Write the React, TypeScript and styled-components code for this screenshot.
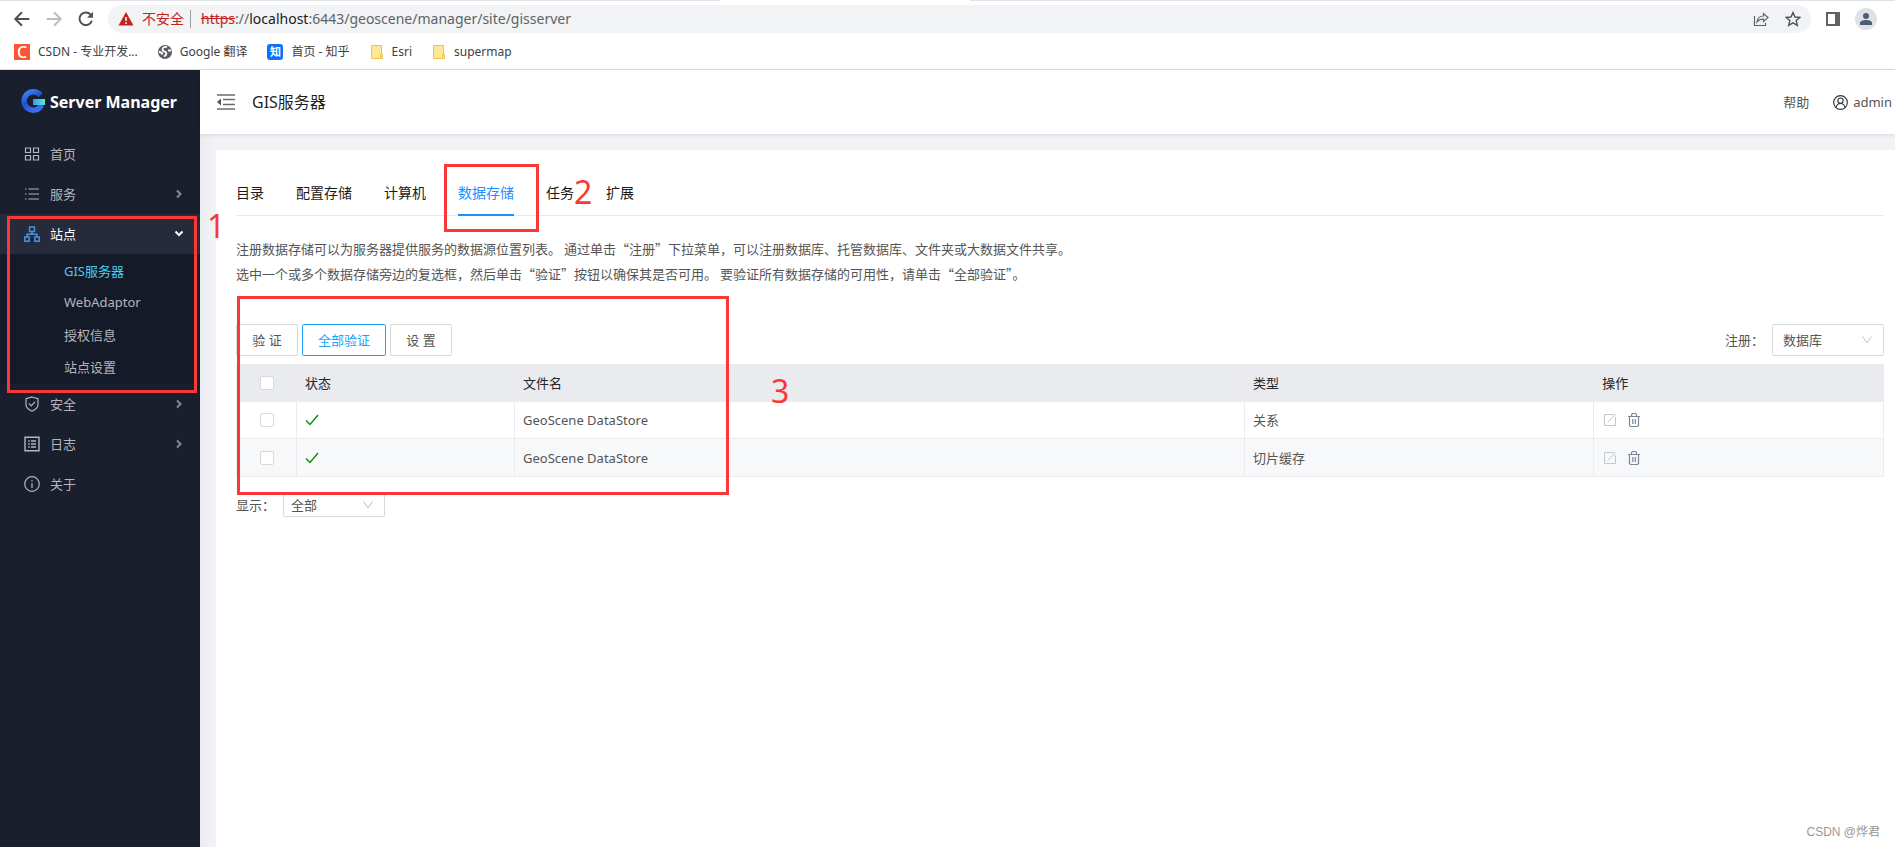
import React from "react";
import styled, { createGlobalStyle, css } from "styled-components";

const LATIN = `"Noto Sans", "Noto Sans CJK SC", sans-serif`;
const HAN = `"Noto Sans CJK SC", "Noto Sans", sans-serif`;
const RED = "#fb3838";

const Global = createGlobalStyle`
  *, *::before, *::after { box-sizing: border-box; }
  body { margin: 0; background: #fff; font-family: ${LATIN}; font-size: 13px; color: #555; }
  button, select, input { font: inherit; color: inherit; margin: 0; }
  a { color: inherit; text-decoration: none; }
  ul { list-style: none; margin: 0; padding: 0; }
  svg { display: block; flex: none; }
`;

const Page = styled.div`
  display: flex;
  flex-direction: column;
  min-height: 100vh;
`;

/* ---------- browser frame ---------- */

const Browser = styled.header`
  height: 70px;
  border-bottom: 1px solid #dadce0;
  background: #fff;
`;

/* bottom edge of the tab strip, open under the active tab */
const TabStrip = styled.div`
  height: 1px;
  padding-left: 38%;
  background: #dee1e6;
`;

const ActiveTabEdge = styled.div`
  width: 250px;
  height: 1px;
  background: #fff;
`;

const AddressRow = styled.div`
  display: flex;
  align-items: center;
  height: 36px;
  padding: 0 18px 0 12px;
`;

const IconButton = styled.button<{ $w?: number }>`
  display: flex;
  align-items: center;
  justify-content: center;
  width: ${(p) => p.$w ?? 20}px;
  height: 20px;
  padding: 0;
  border: 0;
  background: none;
  cursor: pointer;
`;

const NavButtons = styled.div`
  display: flex;
  gap: 12px;
  padding-right: 12px;
`;

const AddressBar = styled.div`
  flex: 1;
  display: flex;
  align-items: center;
  gap: 10px;
  height: 28px;
  padding: 0 8px 0 10px;
  border-radius: 14px;
  background: #f1f3f4;
  font-size: 14px;
  line-height: 20px;
`;

const Warning = styled.span`
  display: flex;
  align-items: center;
  gap: 8px;
  padding-right: 6px;
  border-right: 1px solid #9aa0a6;
  height: 18px;
  color: #c5221f;
`;

const Url = styled.div`
  flex: 1;
  color: #5f6368;
  white-space: nowrap;
  s { color: #c5221f; }
  b { font-weight: 400; color: #202124; }
`;

const AddressTools = styled.div`
  display: flex;
  gap: 12px;
`;

const WindowTools = styled.div`
  display: flex;
  align-items: center;
  gap: 12px;
  padding-left: 12px;
`;

const Avatar = styled.button`
  display: flex;
  align-items: center;
  justify-content: center;
  width: 22px;
  height: 22px;
  padding: 0;
  border: 0;
  border-radius: 50%;
  background: #dee1e6;
`;

const Bookmarks = styled.nav`
  display: flex;
  align-items: center;
  gap: 20px;
  height: 30px;
  padding-left: 14px;
`;

const Bookmark = styled.a`
  display: flex;
  align-items: center;
  gap: 8px;
  font-size: 12px;
  line-height: 16px;
  color: #3c4043;
`;

const SiteBadge = styled.span<{ $bg: string; $round?: boolean }>`
  display: flex;
  align-items: center;
  justify-content: center;
  width: 16px;
  height: 16px;
  border-radius: ${(p) => (p.$round ? 3 : 0)}px;
  background: ${(p) => p.$bg};
  color: #fff;
  font-size: ${(p) => (p.$round ? 11 : 16)}px;
  font-weight: ${(p) => (p.$round ? 700 : 500)};
`;

/* ---------- application ---------- */

const Shell = styled.div`
  flex: 1;
  display: flex;
`;

const Sidebar = styled.aside`
  flex: none;
  width: 200px;
  background: #1a1f2d;
  color: #b4b6bb;
`;

const Brand = styled.div`
  display: flex;
  align-items: center;
  gap: 4px;
  height: 64px;
  padding-left: 21px;
  color: #fff;
  font-size: 16px;
  font-weight: 700;
  white-space: nowrap;
`;

const MenuLink = styled.a<{ $active?: boolean }>`
  display: flex;
  align-items: center;
  gap: 10px;
  height: 40px;
  padding: 0 16px 0 24px;
  ${(p) => p.$active && css`background: #252b3a; color: #fff;`}
`;

const MenuText = styled.span`
  flex: 1;
  line-height: 20px;
`;

const Group = styled.li`
  position: relative;
`;

const SubMenu = styled.ul`
  padding-bottom: 2px;
  background: #151a28;
`;

const SubLink = styled.a<{ $active?: boolean }>`
  display: flex;
  align-items: center;
  height: 32px;
  padding-left: 64px;
  color: ${(p) => (p.$active ? "#45cdf0" : "inherit")};
`;

const Main = styled.div`
  flex: 1;
  min-width: 0;
  display: flex;
  flex-direction: column;
  background: #f0f2f6;
`;

const TopBar = styled.div`
  position: relative;
  display: flex;
  align-items: center;
  height: 64px;
  padding: 0 3px 0 16px;
  background: #fff;
  box-shadow: 0 1px 4px rgba(0, 21, 41, 0.1);
`;

const Title = styled.h1`
  flex: 1;
  margin: 0 0 0 16px;
  font-size: 16px;
  font-weight: 400;
  line-height: 24px;
  color: #1f1f1f;
`;

const TopLinks = styled.div`
  display: flex;
  gap: 24px;
  a { display: flex; align-items: center; gap: 5px; line-height: 20px; }
`;

const Body = styled.main`
  flex: 1;
  display: flex;
  padding: 16px 0 0 16px;
  background: linear-gradient(to right, #e9ebef, #f0f2f6 12px);
`;

const Card = styled.section`
  flex: 1;
  min-width: 0;
  display: flex;
  flex-direction: column;
  padding: 20px 11px 8px 20px;
  background: #fff;
`;

const Tabs = styled.nav`
  display: flex;
  gap: 32px;
  height: 46px;
  border-bottom: 1px solid #e8e8e8;
`;

const Tab = styled.a<{ $active?: boolean }>`
  position: relative;
  height: 46px;
  font-size: 14px;
  line-height: 46px;
  color: ${(p) => (p.$active ? "#1890ff" : "#1a1a1a")};
  border-bottom: 2px solid ${(p) => (p.$active ? "#1890ff" : "transparent")};
`;

const Intro = styled.p`
  margin: 20px 0 2px;
  font-family: ${HAN};
  line-height: 25px;
`;

const Data = styled.div`
  position: relative;
  padding-top: 36px;
`;

const Toolbar = styled.div`
  display: flex;
  align-items: center;
  gap: 4px;
`;

const Button = styled.button<{ $primary?: boolean }>`
  height: 32px;
  padding: 0 ${(p) => (p.$primary ? 15 : 15)}px;
  min-width: 62px;
  border: 1px solid ${(p) => (p.$primary ? "#1da1fb" : "#d9d9d9")};
  border-radius: 2px;
  background: #fff;
  color: ${(p) => (p.$primary ? "#1da1fb" : "#555")};
  line-height: 20px;
`;

const Field = styled.label<{ $end?: boolean }>`
  display: flex;
  align-items: center;
  gap: 8px;
  margin-left: ${(p) => (p.$end ? "auto" : "0")};
  line-height: 20px;
`;

const SelectBox = styled.span<{ $w: number; $h: number }>`
  display: grid;
  align-items: center;
  width: ${(p) => p.$w}px;
  height: ${(p) => p.$h}px;
  border: 1px solid #d9d9d9;
  border-radius: 2px;
  > * { grid-area: 1 / 1; }
  > svg { justify-self: end; margin-right: 10px; pointer-events: none; }
`;

const Select = styled.select<{ $pad: number }>`
  appearance: none;
  width: 100%;
  height: 100%;
  padding: 0 ${(p) => p.$pad}px;
  border: 0;
  background: none;
  outline: 0;
`;

const Table = styled.table`
  width: 100%;
  margin-top: 8px;
  table-layout: fixed;
  border-collapse: collapse;
  th, td {
    height: 37px;
    padding: 0 8px;
    border: 1px solid #ececee;
    text-align: left;
    font-weight: 400;
    line-height: 20px;
  }
  th { background: #eaebef; color: #262626; }
  tbody tr:nth-child(even) { height: 38px; background: #f7f8fa; }
  th:first-child, td:first-child { text-align: center; }
`;

const Col = styled.col<{ $w: string }>`
  width: ${(p) => p.$w};
`;

const Checkbox = styled.input`
  appearance: none;
  display: block;
  width: 14px;
  height: 14px;
  margin: 0 auto;
  border: 1px solid #d9d9d9;
  border-radius: 2px;
  background: #fff;
`;

const Actions = styled.div`
  display: flex;
  gap: 4px;
`;

const Footer = styled.div`
  padding-top: 16px;
`;

const Watermark = styled.p`
  margin: auto 4px 0 0;
  text-align: right;
  font-family: "Liberation Sans", "Noto Sans CJK SC", sans-serif;
  font-size: 12px;
  line-height: 14px;
  color: #999;
`;

/* ---------- red marks drawn over the page ---------- */

const Frame = styled.span<{ $t: number; $r: string; $b: number; $l: number; $w?: number }>`
  position: absolute;
  z-index: 1;
  top: ${(p) => p.$t}px;
  right: ${(p) => p.$r};
  bottom: ${(p) => p.$b}px;
  left: ${(p) => p.$l}px;
  width: ${(p) => (p.$w ? `${p.$w}px` : "auto")};
  border: 3px solid ${RED};
  pointer-events: none;
`;

const Digit = styled.span<{ $t: number; $l: number }>`
  position: absolute;
  z-index: 1;
  top: ${(p) => p.$t}px;
  left: ${(p) => p.$l}px;
  font-size: 32px;
  line-height: 32px;
  color: ${RED};
  pointer-events: none;
`;

/* ---------- icons ---------- */

const Icon = ({ size = 16, children, color = "currentColor", w = 1.2 }: { size?: number; children: React.ReactNode; color?: string; w?: number }) => (
  <svg width={size} height={size} viewBox="0 0 16 16" fill="none" stroke={color} strokeWidth={w} aria-hidden="true">
    {children}
  </svg>
);

const icons: Record<string, React.ReactNode> = {
  home: <Icon><path d="M1.500 2h5v4.500h-5zM9.500 2h5v4.500h-5zM1.500 9.500h5v4.500h-5zM9.500 9.500h5v4.500h-5z" /></Icon>,
  list: <Icon><path d="M4.500 3h10.500M4.500 8h10.500M4.500 13h10.500M1 3h1.500M1 8h1.500M1 13h1.500" /></Icon>,
  site: <Icon color="#4796e6" w={1.400}><path d="M5.500 1h5v4.500h-5zM.800 11h4.400v4.200H.800zM10.800 11h4.400v4.200h-4.400zM8 5.500v2.500M3 11V8.200h10V11" /></Icon>,
  shield: <Icon><path d="M8 1l6 1.800v6.200c0 2.600-3 4.800-6 6.200-3-1.400-6-3.600-6-6.200V2.800zM5 7.500l2.300 2.300 3.700-4" /></Icon>,
  log: <Icon w={1.400}><path d="M1 1.200h14v13.600H1zM4.200 5h1.600M4.200 8h1.600M4.200 11h1.600M7 5h5M7 8h5M7 11h5" /></Icon>,
  about: <Icon><circle cx="8" cy="8" r="7.300" /><path d="M8 7v5M8 4v1.500" /></Icon>,
};

const Chevron = ({ down }: { down?: boolean }) => (
  <svg width="10" height="10" viewBox="0 0 10 10" fill="none" stroke={down ? "#fff" : "#878a92"} strokeWidth="2" aria-hidden="true">
    <path d={down ? "M1.500 2.500l3.500 3.500L8.500 2.500" : "M3 1.500L6.500 5 3 8.500"} />
  </svg>
);

const Caret = () => (
  <svg width="12" height="12" viewBox="0 0 12 12" fill="none" stroke="#bfbfbf" aria-hidden="true">
    <path d="M1.500 2.500L6 9l4.500-6.500" />
  </svg>
);

const Folder = () => (
  <svg width="14" height="16" viewBox="0 0 14 16" aria-hidden="true">
    <path d="M1.500 1.500h10v13h-10z" fill="#ffe797" stroke="#e9c54e" />
    <path d="M10.500 10.500h2v4h-2z" fill="#ffe797" stroke="#e9c54e" />
  </svg>
);

const Logo = () => (
  <svg width="25" height="26" viewBox="0 0 25 26" aria-hidden="true">
    <defs>
      <linearGradient id="ring" x1="0" y1="0" x2="0.600" y2="1">
        <stop offset="0" stopColor="#3f86f7" />
        <stop offset="0.500" stopColor="#2450cf" />
        <stop offset="1" stopColor="#3c6cf0" />
      </linearGradient>
      <linearGradient id="bar" x1="0" x2="1">
        <stop offset="0" stopColor="#2f9fe8" />
        <stop offset="1" stopColor="#5eeadb" />
      </linearGradient>
    </defs>
    <path d="M19.500 6.200A9.200 9.200 0 1 0 20.600 16" fill="none" stroke="url(#ring)" strokeWidth="5.500" />
    <path d="M12 10h12v6H12z" fill="url(#bar)" />
  </svg>
);

const EditIcon = () => (
  <svg width="16" height="16" viewBox="0 0 16 16" fill="none" stroke="#c3c8d0" aria-hidden="true">
    <path d="M12 2.500H2.500v11h11V5M5.500 10.500L13.500 2.500" />
  </svg>
);

const TrashIcon = () => (
  <svg width="16" height="16" viewBox="0 0 16 16" fill="none" stroke="#7d879b" strokeWidth="1.200" aria-hidden="true">
    <path d="M2 4.500h12M5.500 4.500V2.500l1-1h3l1 1v2M3.500 4.500v9l1 1h7l1-1v-9M6.800 7v5M9.300 7v5" />
  </svg>
);

/* ---------- content ---------- */

const siteLinks = ["GIS服务器", "WebAdaptor", "授权信息", "站点设置"];
const tabs = ["目录", "配置存储", "计算机", "数据存储", "任务", "扩展"];
const rows = [
  { name: "GeoScene DataStore", type: "关系" },
  { name: "GeoScene DataStore", type: "切片缓存" },
];

const MenuItem = ({ icon, label, more }: { icon: string; label: string; more?: boolean }) => (
  <li>
    <MenuLink href="#">
      {icons[icon]}
      <MenuText>{label}</MenuText>
      {more && <Chevron />}
    </MenuLink>
  </li>
);

export default function App() {
  return (
    <Page>
      <Global />
      <Browser>
        <TabStrip><ActiveTabEdge /></TabStrip>
        <AddressRow>
          <NavButtons>
            <IconButton aria-label="后退">
              <Icon size={18} color="#4d5156" w={1.700}><path d="M14.500 8H2.500M8 2L2 8l6 6" /></Icon>
            </IconButton>
            <IconButton aria-label="前进">
              <Icon size={18} color="#babcbe" w={1.700}><path d="M1.500 8h12M8 2l6 6-6 6" /></Icon>
            </IconButton>
            <IconButton aria-label="刷新">
              <Icon size={18} color="#4d5156" w={1.800}>
                <path d="M13.200 9.500A5.600 5.600 0 1 1 12 4" />
                <path d="M14.200 1.500v5.300H8.900z" fill="#4d5156" stroke="none" />
              </Icon>
            </IconButton>
          </NavButtons>
          <AddressBar>
            <Warning>
              <svg width="16" height="16" viewBox="0 0 16 16" aria-hidden="true">
                <path d="M8 1l7.500 13.500H.500z" fill="#c5221f" />
                <path d="M8 6v4M8 11.200v1.800" stroke="#fff" strokeWidth="1.500" />
              </svg>
              不安全
            </Warning>
            <Url role="textbox" aria-label="地址"><s>https</s>://<b>localhost</b>:6443/geoscene/manager/site/gisserver</Url>
            <AddressTools>
              <IconButton aria-label="分享">
                <Icon color="#5f6368"><path d="M1.500 5v9.500h11V12M4 11c.5-4 3-6 6.500-6V2.500L15 6.500l-4.500 4V8C8 8 5.500 9 4 11z" /></Icon>
              </IconButton>
              <IconButton aria-label="收藏">
                <Icon color="#4d5156" w={1.400}><path d="M8 1.500l2 4.500 4.800.400-3.600 3.200 1.100 4.800L8 11.900l-4.300 2.500 1.100-4.800L1.200 6.400 6 6z" /></Icon>
              </IconButton>
            </AddressTools>
          </AddressBar>
          <WindowTools>
            <IconButton aria-label="侧边栏">
              <svg width="14" height="14" viewBox="0 0 14 14" aria-hidden="true">
                <path d="M0 0h14v14H0zM2 2v10h7V2z" fill="#5f6368" fillRule="evenodd" />
              </svg>
            </IconButton>
            <Avatar aria-label="用户">
              <svg width="12" height="12" viewBox="0 0 12 12" fill="#4f5b73" aria-hidden="true">
                <circle cx="6" cy="3" r="3" />
                <path d="M0 12V10c0-2 3-3 6-3s6 1 6 3v2z" />
              </svg>
            </Avatar>
          </WindowTools>
        </AddressRow>
        <Bookmarks>
          <Bookmark href="#"><SiteBadge $bg="#fc5531">C</SiteBadge>CSDN - 专业开发...</Bookmark>
          <Bookmark href="#">
            <svg width="14" height="16" viewBox="1 0 14 16" aria-hidden="true">
              <circle cx="8" cy="8" r="7" fill="#5a5d61" />
              <path d="M10 3C7.500 2.500 5.500 3.500 5.500 5.500S8 7.500 9 8.500 9 11.500 7 12.500M2 8c2 0 3 .500 3.500 2.500M11 6.500h3" fill="none" stroke="#fff" strokeWidth="1.800" />
            </svg>
            Google 翻译
          </Bookmark>
          <Bookmark href="#"><SiteBadge $bg="#0b73fb" $round>知</SiteBadge>首页 - 知乎</Bookmark>
          <Bookmark href="#"><Folder />Esri</Bookmark>
          <Bookmark href="#"><Folder />supermap</Bookmark>
        </Bookmarks>
      </Browser>

      <Shell>
        <Sidebar>
          <Brand><Logo />Server Manager</Brand>
          <ul>
            <MenuItem icon="home" label="首页" />
            <MenuItem icon="list" label="服务" more />
            <Group>
              <MenuLink href="#" $active>
                {icons.site}
                <MenuText>站点</MenuText>
                <Chevron down />
              </MenuLink>
              <SubMenu>
                {siteLinks.map((label, i) => (
                  <li key={label}><SubLink href="#" $active={i === 0}>{label}</SubLink></li>
                ))}
              </SubMenu>
              <Frame $t={2} $r="3px" $b={-9} $l={7} />
              <Digit $t={-4} $l={207}>1</Digit>
            </Group>
            <MenuItem icon="shield" label="安全" more />
            <MenuItem icon="log" label="日志" more />
            <MenuItem icon="about" label="关于" />
          </ul>
        </Sidebar>

        <Main>
          <TopBar>
            <IconButton aria-label="收起菜单">
              <svg width="18" height="16" viewBox="0 0 18 16" aria-hidden="true">
                <path d="M0 1h18M6 5.500h12M6 10.500h12M0 15h18" stroke="#6b6b6b" strokeWidth="1.500" />
                <path d="M4 4.500v7L0 8z" fill="#555" />
              </svg>
            </IconButton>
            <Title>GIS服务器</Title>
            <TopLinks>
              <a href="#">帮助</a>
              <a href="#">
                <Icon size={15} color="#333" w={1.200}><circle cx="8" cy="8" r="7.300" /><circle cx="8" cy="6" r="2.800" /><path d="M3.200 13.500c.5-3 2.500-4.500 4.800-4.500s4.300 1.500 4.800 4.500" /></Icon>
                admin
              </a>
            </TopLinks>
          </TopBar>
          <Body>
            <Card>
              <Tabs>
                {tabs.map((label) => (
                  <Tab key={label} href="#" $active={label === "数据存储"}>
                    {label}
                    {label === "数据存储" && <Frame $t={-6} $r="-25px" $b={-18} $l={-14} />}
                    {label === "任务" && <Digit $t={6} $l={28}>2</Digit>}
                  </Tab>
                ))}
              </Tabs>
              <Intro>
                注册数据存储可以为服务器提供服务的数据源位置列表。 通过单击“注册”下拉菜单，可以注册数据库、托管数据库、文件夹或大数据文件共享。
                <br />
                选中一个或多个数据存储旁边的复选框，然后单击“验证”按钮以确保其是否可用。 要验证所有数据存储的可用性，请单击“全部验证”。
              </Intro>
              <Data>
                <Toolbar>
                  <Button>验 证</Button>
                  <Button $primary>全部验证</Button>
                  <Button>设 置</Button>
                  <Field $end>
                    注册：
                    <SelectBox $w={112} $h={32}>
                      <Select $pad={10} defaultValue="数据库"><option>数据库</option></Select>
                      <Caret />
                    </SelectBox>
                  </Field>
                </Toolbar>
                <Table>
                  <colgroup>
                    <Col $w="60px" />
                    <Col $w="218px" />
                    <Col $w="auto" />
                    <Col $w="21.200%" />
                    <Col $w="17.600%" />
                  </colgroup>
                  <thead>
                    <tr>
                      <th><Checkbox type="checkbox" aria-label="全选" /></th>
                      <th>状态</th>
                      <th>文件名</th>
                      <th>类型</th>
                      <th>操作</th>
                    </tr>
                  </thead>
                  <tbody>
                    {rows.map((row) => (
                      <tr key={row.type}>
                        <td><Checkbox type="checkbox" aria-label={row.type} /></td>
                        <td>
                          <svg width="14" height="14" viewBox="0 0 14 14" fill="none" stroke="#138a13" strokeWidth="1.400" role="img" aria-label="正常">
                            <path d="M1 7.500l4 4L13 2" />
                          </svg>
                        </td>
                        <td>{row.name}</td>
                        <td>{row.type}</td>
                        <td>
                          <Actions>
                            <IconButton $w={16} aria-label="编辑"><EditIcon /></IconButton>
                            <IconButton $w={24} aria-label="删除"><TrashIcon /></IconButton>
                          </Actions>
                        </td>
                      </tr>
                    ))}
                  </tbody>
                </Table>
                <Frame $t={8} $r="auto" $b={-18} $l={1} $w={492} />
                <Digit $t={87} $l={535}>3</Digit>
              </Data>
              <Footer>
                <Field>
                  显示：
                  <SelectBox $w={102} $h={24}>
                    <Select $pad={7} defaultValue="全部"><option>全部</option></Select>
                    <Caret />
                  </SelectBox>
                </Field>
              </Footer>
              <Watermark>CSDN @烨君</Watermark>
            </Card>
          </Body>
        </Main>
      </Shell>
    </Page>
  );
}
